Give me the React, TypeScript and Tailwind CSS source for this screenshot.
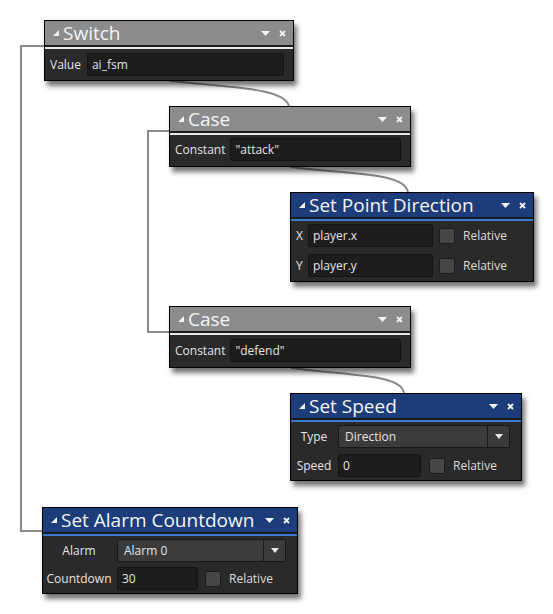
import type { ReactNode } from "react";

// GameMaker-style drag and drop action graph. Nodes sit on a free canvas, so
// each one is placed by its coordinates; the wires are drawn underneath in one svg.

const FONT = { fontFamily: '"Open Sans", "Noto Sans", sans-serif' };

function Node({
  title,
  blue,
  x,
  y,
  w,
  children,
}: {
  title: string;
  blue?: boolean;
  x: number;
  y: number;
  w: number;
  children: ReactNode;
}) {
  return (
    <div
      className="absolute border border-black bg-[#2a2a2a] shadow-[3px_5px_5px_rgba(0,0,0,0.55)]"
      style={{ left: x, top: y, width: w }}
    >
      <div className={`flex h-[24px] items-center pl-[8px] pr-[7px] ${blue ? "bg-[#1c3d79]" : "bg-[#8c8c8c]"}`}>
        <svg width="7" height="7" viewBox="0 0 7 7" className="shrink-0">
          <polygon points="6,0 6,6 0,6" fill="#f2f2f2" />
        </svg>
        <span className="ml-[3px] text-[19px] leading-none text-[#f4f4f4]">{title}</span>
        <div className="ml-auto flex items-center gap-[9px]">
          <svg width="9" height="5" viewBox="0 0 9 5">
            <polygon points="0,0 9,0 4.5,5" fill="#f2f2f2" />
          </svg>
          <svg width="7" height="7" viewBox="0 0 7 7">
            <path d="M1 1 L6 6 M6 1 L1 6" stroke="#f2f2f2" strokeWidth="1.8" />
          </svg>
        </div>
      </div>
      <div className="h-[2px] bg-[#1a1a1a]" />
      <div className={`h-[2px] ${blue ? "bg-[#3a7bd2]" : "bg-[#e8e8e8]"}`} />
      {children}
    </div>
  );
}

function Field({ value, w }: { value: string; w?: number }) {
  return (
    <div
      className={`flex h-[23px] items-center rounded-[2px] border border-[#141414] bg-[#1d1d1d] pl-[4px] text-[12px] text-[#e4e4e4] ${w ? "" : "flex-1"}`}
      style={w ? { width: w } : undefined}
    >
      {value}
    </div>
  );
}

function Select({ value }: { value: string }) {
  return (
    <div className="flex h-[23px] flex-1 items-stretch rounded-[2px] border border-[#181818] bg-[#3b3b3b] text-[12px] text-[#e4e4e4]">
      <div className="flex flex-1 items-center pl-[6px]">{value}</div>
      <div className="flex w-[22px] items-center justify-center border-l border-[#1c1c1c]">
        <svg width="8" height="5" viewBox="0 0 8 5">
          <polygon points="0,0 8,0 4,5" fill="#e8e8e8" />
        </svg>
      </div>
    </div>
  );
}

function Relative() {
  return (
    <div className="flex h-[23px] items-center gap-[8px] text-[12px] text-[#dcdcdc]">
      <div className="h-[16px] w-[16px] rounded-[2px] border border-[#1c1c1c] bg-[#464646]" />
      <span>Relative</span>
    </div>
  );
}

export default function App() {
  return (
    <div className="relative h-[614px] w-[553px] overflow-hidden bg-white" style={FONT}>
      <svg className="absolute inset-0" width="553" height="614" fill="none">
        <g stroke="#8a8a8a" strokeWidth="2">
          <path d="M44 46 H21 V531 H42" />
          <path d="M169 131 H148 V332 H169" />
          <path d="M170 81 C 235 88, 284 88, 289 106" />
          <path d="M291 167 C 350 175, 404 172, 408 192" />
          <path d="M291 368 C 350 376, 401 374, 404 393" />
        </g>
      </svg>

      <Node title="Switch" x={44} y={20} w={250}>
        <div className="flex items-center gap-[6px] pb-[4px] pl-[5px] pr-[9px] pt-[4px] text-[12px] text-[#e4e4e4]">
          <span>Value</span>
          <Field value="ai_fsm" />
        </div>
      </Node>

      <Node title="Case" x={169} y={106} w={242}>
        <div className="flex items-center gap-[5px] pb-[5px] pl-[5px] pr-[9px] pt-[3px] text-[12px] text-[#e4e4e4]">
          <span>Constant</span>
          <Field value={'"attack"'} />
        </div>
      </Node>

      <Node title="Set Point Direction" blue x={290} y={192} w={244}>
        <div className="flex flex-col gap-[7px] pb-[4px] pl-[5px] pt-[3px] text-[12px] text-[#e4e4e4]">
          <div className="flex items-center">
            <span className="w-[12px]">X</span>
            <Field value="player.x" w={125} />
            <div className="ml-[6px]">
              <Relative />
            </div>
          </div>
          <div className="flex items-center">
            <span className="w-[12px]">Y</span>
            <Field value="player.y" w={125} />
            <div className="ml-[6px]">
              <Relative />
            </div>
          </div>
        </div>
      </Node>

      <Node title="Case" x={169} y={306} w={242}>
        <div className="flex items-center gap-[5px] pb-[5px] pl-[5px] pr-[9px] pt-[4px] text-[12px] text-[#e4e4e4]">
          <span>Constant</span>
          <Field value={'"defend"'} />
        </div>
      </Node>

      <Node title="Set Speed" blue x={290} y={393} w={232}>
        <div className="flex flex-col gap-[6px] pb-[3px] pl-[2px] pr-[11px] pt-[3px] text-[12px] text-[#e4e4e4]">
          <div className="flex items-center gap-[3px]">
            <span className="w-[42px] text-center">Type</span>
            <Select value="Direction" />
          </div>
          <div className="flex items-center gap-[3px]">
            <span className="w-[42px] text-center">Speed</span>
            <Field value="0" w={83} />
            <div className="ml-[5px]">
              <Relative />
            </div>
          </div>
        </div>
      </Node>

      <Node title="Set Alarm Countdown" blue x={42} y={507} w={256}>
        <div className="flex flex-col gap-[5px] pb-[3px] pl-[2px] pr-[11px] pt-[3px] text-[12px] text-[#e4e4e4]">
          <div className="flex items-center gap-[4px]">
            <span className="w-[68px] text-center">Alarm</span>
            <Select value="Alarm 0" />
          </div>
          <div className="flex items-center gap-[4px]">
            <span className="w-[68px] text-center">Countdown</span>
            <Field value="30" w={81} />
            <div className="ml-[3px]">
              <Relative />
            </div>
          </div>
        </div>
      </Node>
    </div>
  );
}
